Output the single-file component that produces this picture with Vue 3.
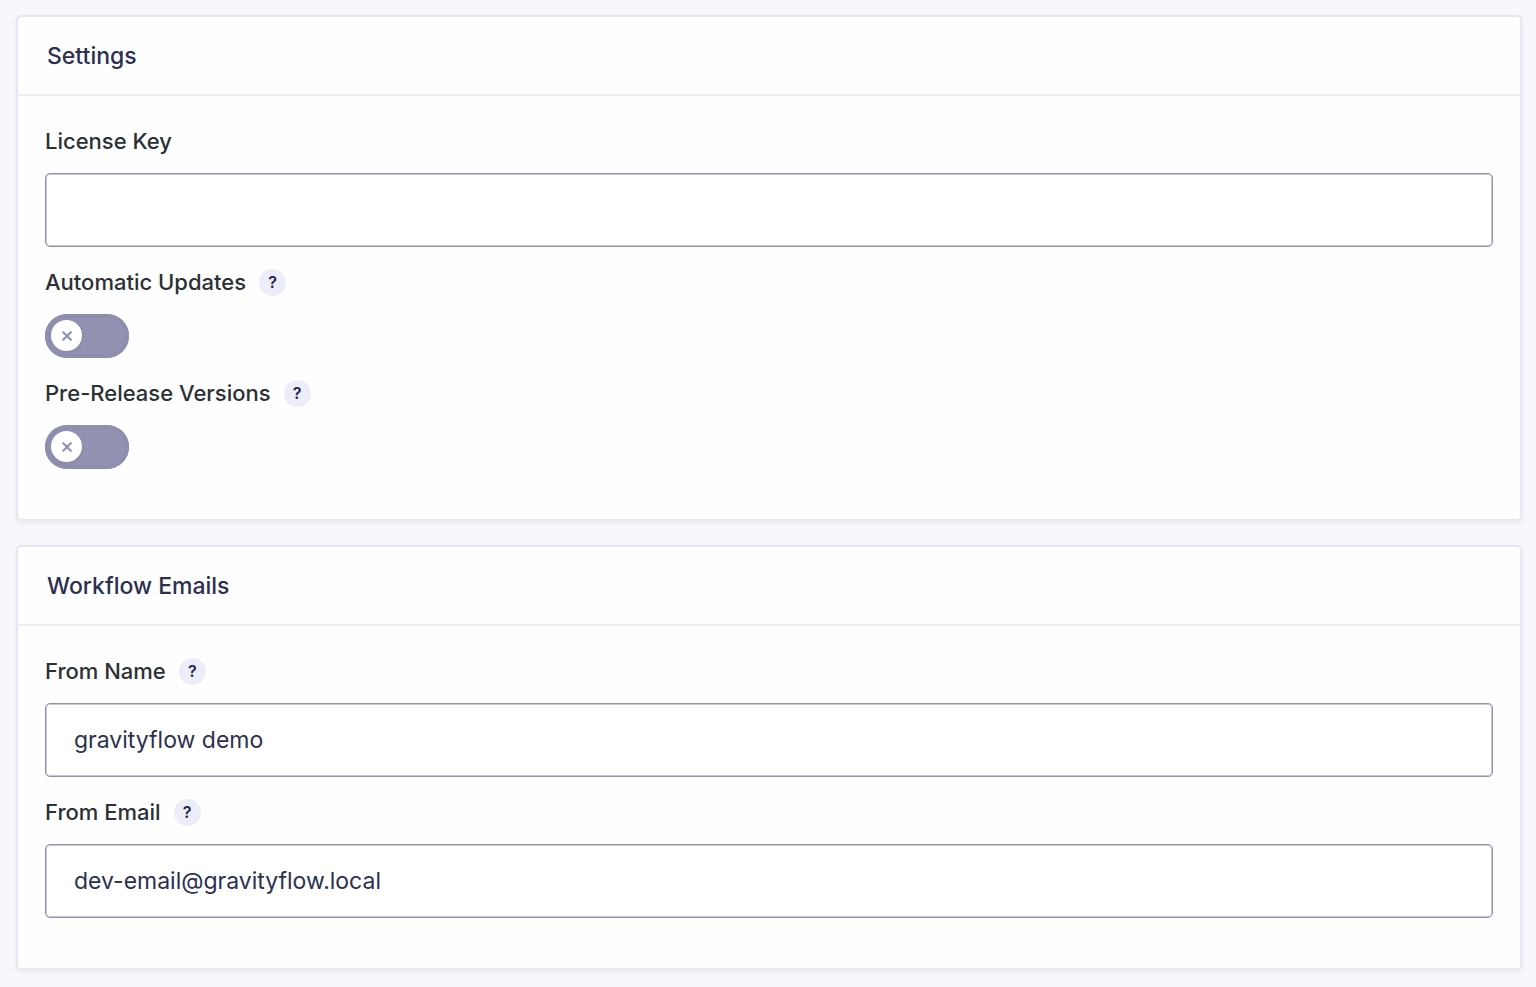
<template>
  <main class="settings-page">
    <section v-for="panel in panels" :key="panel.id" class="panel">
      <header class="panel-header">
        <h2 class="panel-title">{{ panel.title }}</h2>
      </header>

      <div class="panel-body">
        <div v-for="field in panel.fields" :key="field.id" class="field">
          <div class="field-label">
            <label :for="field.id">{{ field.label }}</label>
            <button v-if="field.help" type="button" class="help">?</button>
          </div>

          <!-- Toggle -->
          <div v-if="field.type === 'toggle'" class="toggle">
            <input
              :id="field.id"
              v-model="values[field.id]"
              type="checkbox"
              class="toggle-input"
            />
            <span class="toggle-knob">
              <svg v-if="!values[field.id]" viewBox="0 0 10 10" width="10" height="10">
                <path d="M1.2 1.2 L8.8 8.8 M8.8 1.2 L1.2 8.8" />
              </svg>
              <svg v-else viewBox="0 0 10 10" width="10" height="10">
                <path d="M1 5.5 L4 8.5 L9 2" />
              </svg>
            </span>
          </div>

          <!-- Text -->
          <input
            v-else
            :id="field.id"
            v-model="values[field.id]"
            :type="field.type"
            class="text-input"
          />
        </div>
      </div>
    </section>
  </main>
</template>

<script setup>
import { reactive } from 'vue'

const panels = [
  {
    id: 'settings',
    title: 'Settings',
    fields: [
      { id: 'license_key', label: 'License Key', type: 'text' },
      { id: 'background_updates', label: 'Automatic Updates', type: 'toggle', help: true },
      { id: 'beta', label: 'Pre-Release Versions', type: 'toggle', help: true }
    ]
  },
  {
    id: 'emails',
    title: 'Workflow Emails',
    fields: [
      { id: 'from_name', label: 'From Name', type: 'text', help: true },
      { id: 'from_email', label: 'From Email', type: 'email', help: true }
    ]
  }
]

const values = reactive({
  license_key: '',
  background_updates: false,
  beta: false,
  from_name: 'gravityflow demo',
  from_email: 'dev-email@gravityflow.local'
})
</script>

<style>
body {
  margin: 0;
  background: #f6f8fc;
}
</style>

<style scoped>
.settings-page {
  display: flex;
  flex-direction: column;
  gap: 24px;
  padding: 15px 14px 17px 16px;
  font-family: Inter, 'Liberation Sans', sans-serif;
  color: #2c2f52;
}

.panel {
  background: #fefefe;
  border: 2px solid #e6e8f1;
  border-radius: 5px;
  box-shadow: 0 2px 5px rgba(36, 39, 72, 0.07);
}

.panel-header {
  display: flex;
  align-items: center;
  height: 77px;
  padding: 0 29px;
  border-bottom: 2px solid #ebecf4;
}

.panel-title {
  margin: 0;
  font-size: 23px;
  font-weight: 500;
  line-height: 32px;
}

.panel-body {
  display: flex;
  flex-direction: column;
  gap: 19px;
  padding: 29px 27px 50px;
}

.field {
  display: flex;
  flex-direction: column;
  gap: 16px;
}

.field-label {
  display: flex;
  align-items: center;
  gap: 13px;
  height: 32px;
  font-size: 22px;
  font-weight: 500;
  line-height: 32px;
  color: #2b3036;
}

.help {
  width: 27px;
  height: 27px;
  padding: 0;
  border: 0;
  border-radius: 50%;
  background: #ecedf8;
  color: #242748;
  font-family: inherit;
  font-size: 16px;
  font-weight: 600;
  line-height: 27px;
  text-align: center;
  cursor: pointer;
}

.text-input {
  box-sizing: border-box;
  width: 100%;
  height: 74px;
  padding: 0 28px;
  border: 1px solid #9092b2;
  border-radius: 5px;
  box-shadow: inset 0 0 0 1px #c6c7da;
  background: #fff;
  color: #2c2f52;
  font-family: inherit;
  font-size: 23px;
  outline: none;
}

.text-input:focus {
  border-color: #3e7da6;
}

.toggle {
  position: relative;
  width: 84px;
  height: 44px;
}

.toggle-input {
  appearance: none;
  display: block;
  width: 84px;
  height: 44px;
  margin: 0;
  border-radius: 22px;
  background: #9292b2;
  box-shadow: inset 0 0 0 4px #8e8eaf;
  cursor: pointer;
}

.toggle-input:checked {
  background: #3e7da6;
  box-shadow: none;
}

.toggle-knob {
  position: absolute;
  top: 6px;
  left: 6px;
  display: flex;
  align-items: center;
  justify-content: center;
  width: 31px;
  height: 31px;
  border-radius: 50%;
  background: #fff;
  box-shadow: 0 1px 3px rgba(36, 39, 72, 0.15);
  pointer-events: none;
}

.toggle-input:checked + .toggle-knob {
  left: 47px;
}

.toggle-knob path {
  fill: none;
  stroke: #9092b2;
  stroke-width: 2.2;
  stroke-linecap: round;
}
</style>
